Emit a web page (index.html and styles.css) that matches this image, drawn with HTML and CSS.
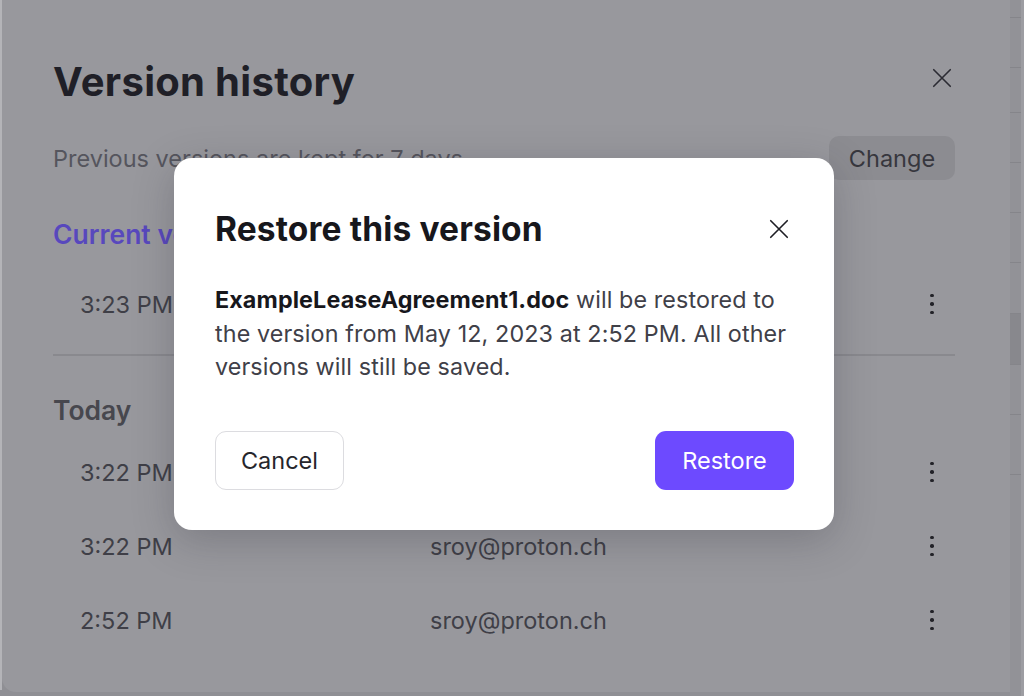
FILE: index.html
```html
<!DOCTYPE html>
<html lang="en">
<head>
<meta charset="utf-8">
<title>Version history</title>
<link rel="stylesheet" href="styles.css">
</head>
<body>
<div class="edge"></div>
<section class="panel">
  <header class="panel-head">
    <h1 class="panel-title">Version history</h1>
    <button class="icon-btn close-bg" aria-label="Close">
      <svg viewBox="0 0 24 24" width="24" height="24"><path d="M3 3 L21 21 M21 3 L3 21" stroke="currentColor" stroke-width="1.8" fill="none" stroke-linecap="round"/></svg>
    </button>
  </header>
  <div class="keep-row">
    <p class="keep-text">Previous versions are kept for 7 days</p>
    <button class="change-btn">Change</button>
  </div>
  <h2 class="section-current">Current version</h2>
  <div class="row">
    <span class="time">3:23 PM</span>
    <span class="kebab"><i></i><i></i><i></i></span>
  </div>
  <hr class="divider">
  <h2 class="section-day">Today</h2>
  <div class="row">
    <span class="time">3:22 PM</span>
    <span class="who">sroy@proton.ch</span>
    <span class="kebab"><i></i><i></i><i></i></span>
  </div>
  <div class="row">
    <span class="time">3:22 PM</span>
    <span class="who">sroy@proton.ch</span>
    <span class="kebab"><i></i><i></i><i></i></span>
  </div>
  <div class="row">
    <span class="time">2:52 PM</span>
    <span class="who">sroy@proton.ch</span>
    <span class="kebab"><i></i><i></i><i></i></span>
  </div>
</section>
<aside class="behind">
  <div class="b-row h18"></div>
  <div class="b-row h50"></div>
  <div class="b-row h45"></div>
  <div class="b-row h50"></div>
  <div class="b-row h50"></div>
  <div class="b-row h50"></div>
  <div class="b-row h51"></div>
  <div class="b-row h51 thumb"></div>
  <div class="b-row h50"></div>
  <div class="b-row h60"></div>
</aside>

<div class="modal" role="dialog">
  <div class="modal-head">
    <h3 class="modal-title">Restore this version</h3>
    <button class="icon-btn close-modal" aria-label="Close">
      <svg viewBox="0 0 24 24" width="24" height="24"><path d="M3 3 L21 21 M21 3 L3 21" stroke="currentColor" stroke-width="1.8" fill="none" stroke-linecap="round"/></svg>
    </button>
  </div>
  <p class="modal-body"><strong>ExampleLeaseAgreement1.doc</strong> will be restored to the version from May 12, 2023 at 2:52 PM. All other versions will still be saved.</p>
  <div class="modal-actions">
    <button class="btn-cancel">Cancel</button>
    <button class="btn-restore">Restore</button>
  </div>
</div>
</body>
</html>
```
FILE: styles.css
```css
* { box-sizing: border-box; }
html, body { margin: 0; padding: 0; }
body {
  width: 1024px;
  height: 696px;
  overflow: hidden;
  background: #8f8f94;
  font-family: Inter, "Noto Sans", sans-serif;
  display: flex;
  position: relative;
}
button { font-family: inherit; }
.edge { width: 2px; background: #b4b4b8; flex: none; height: 690px; }
.panel {
  width: 1008px;
  height: 692px;
  flex: none;
  background: #98989d;
  border-bottom-left-radius: 14px;
  padding: 60px 55px 0 51px;
}
.panel-head {
  display: flex;
  align-items: center;
  justify-content: space-between;
  height: 44px;
}
.panel-title {
  margin: 0;
  font-size: 40px;
  line-height: 44px;
  font-weight: 700;
  color: #1f1f27;
  letter-spacing: 0.3px;
}
.icon-btn {
  background: none;
  border: 0;
  padding: 0;
  display: flex;
  align-items: center;
  justify-content: center;
}
.close-bg { width: 26px; height: 26px; color: #2c2c33; margin-top: -8px; }
.close-bg svg { width: 22px; height: 22px; }
.keep-row {
  display: flex;
  align-items: center;
  justify-content: space-between;
  height: 44px;
  margin-top: 32px;
}
.keep-text { margin: 0; font-size: 23.5px; color: #55555d; }
.change-btn {
  height: 44px;
  width: 126px;
  border: 0;
  border-radius: 10px;
  background: #8c8c91;
  color: #37373e;
  font-size: 23.5px;
}
.section-current {
  margin: 38px 0 0 0;
  line-height: 32px;
  font-size: 26.5px;
  font-weight: 600;
  color: #5848bd;
}
.section-day {
  margin: 38px 0 0 0;
  line-height: 32px;
  font-size: 26.5px;
  font-weight: 600;
  color: #47474e;
}
.row {
  display: flex;
  align-items: center;
  height: 74px;
  font-size: 23.5px;
  color: #3f3f47;
}
.section-current + .row { margin-top: 17px; }
.section-day + .row { margin-top: 9px; }
.time { width: 377px; padding-left: 27px; flex: none; }
.who { flex: 1; }
.kebab {
  width: 46px;
  margin-left: auto;
  display: flex;
  flex-direction: column;
  align-items: center;
  gap: 5px;
}
.kebab i { width: 3.5px; height: 3.5px; border-radius: 50%; background: #222228; display: block; }
.divider {
  margin: 13px 0 0 0;
  border: 0;
  border-top: 2px solid #89898e;
}
.behind {
  flex: none;
  width: 14px;
  height: 696px;
  background: #929297;
  border-right: 3px solid #9d9da2;
}
.b-row { border-bottom: 1px solid #85858a; }
.h18 { height: 18px; }
.h45 { height: 45px; }
.h50 { height: 50px; }
.h51 { height: 51px; }
.h60 { height: 60px; }
.thumb { background: #88888d; }
.modal {
  position: absolute;
  left: 174px;
  top: 158px;
  width: 660px;
  height: 372px;
  background: #fff;
  border-radius: 18px;
  padding: 51px 40px 40px 41px;
  box-shadow: 0 10px 40px rgba(40, 40, 50, 0.25);
}
.modal-head {
  display: flex;
  align-items: center;
  justify-content: space-between;
  height: 40px;
}
.modal-title {
  margin: 0;
  font-size: 33.5px;
  line-height: 40px;
  font-weight: 700;
  color: #17171c;
  letter-spacing: 0.15px;
}
.close-modal { width: 26px; height: 26px; color: #1e1e24; margin-right: 2px; }
.close-modal svg { width: 22px; height: 22px; }
.modal-body {
  margin: 34px -10px 0 0;
  font-size: 23.3px;
  line-height: 33.5px;
  letter-spacing: 0.12px;
  color: #404048;
}
.modal-body strong { color: #17171c; font-weight: 700; }
.modal-actions {
  display: flex;
  justify-content: space-between;
  margin-top: 47px;
}
.btn-cancel {
  width: 129px;
  height: 59px;
  background: #fff;
  border: 1px solid #dcdce0;
  border-radius: 11px;
  font-size: 23.5px;
  color: #26262c;
}
.btn-restore {
  width: 139px;
  height: 59px;
  background: #6d4aff;
  border: 0;
  border-radius: 11px;
  font-size: 23.5px;
  color: #fff;
}
```
